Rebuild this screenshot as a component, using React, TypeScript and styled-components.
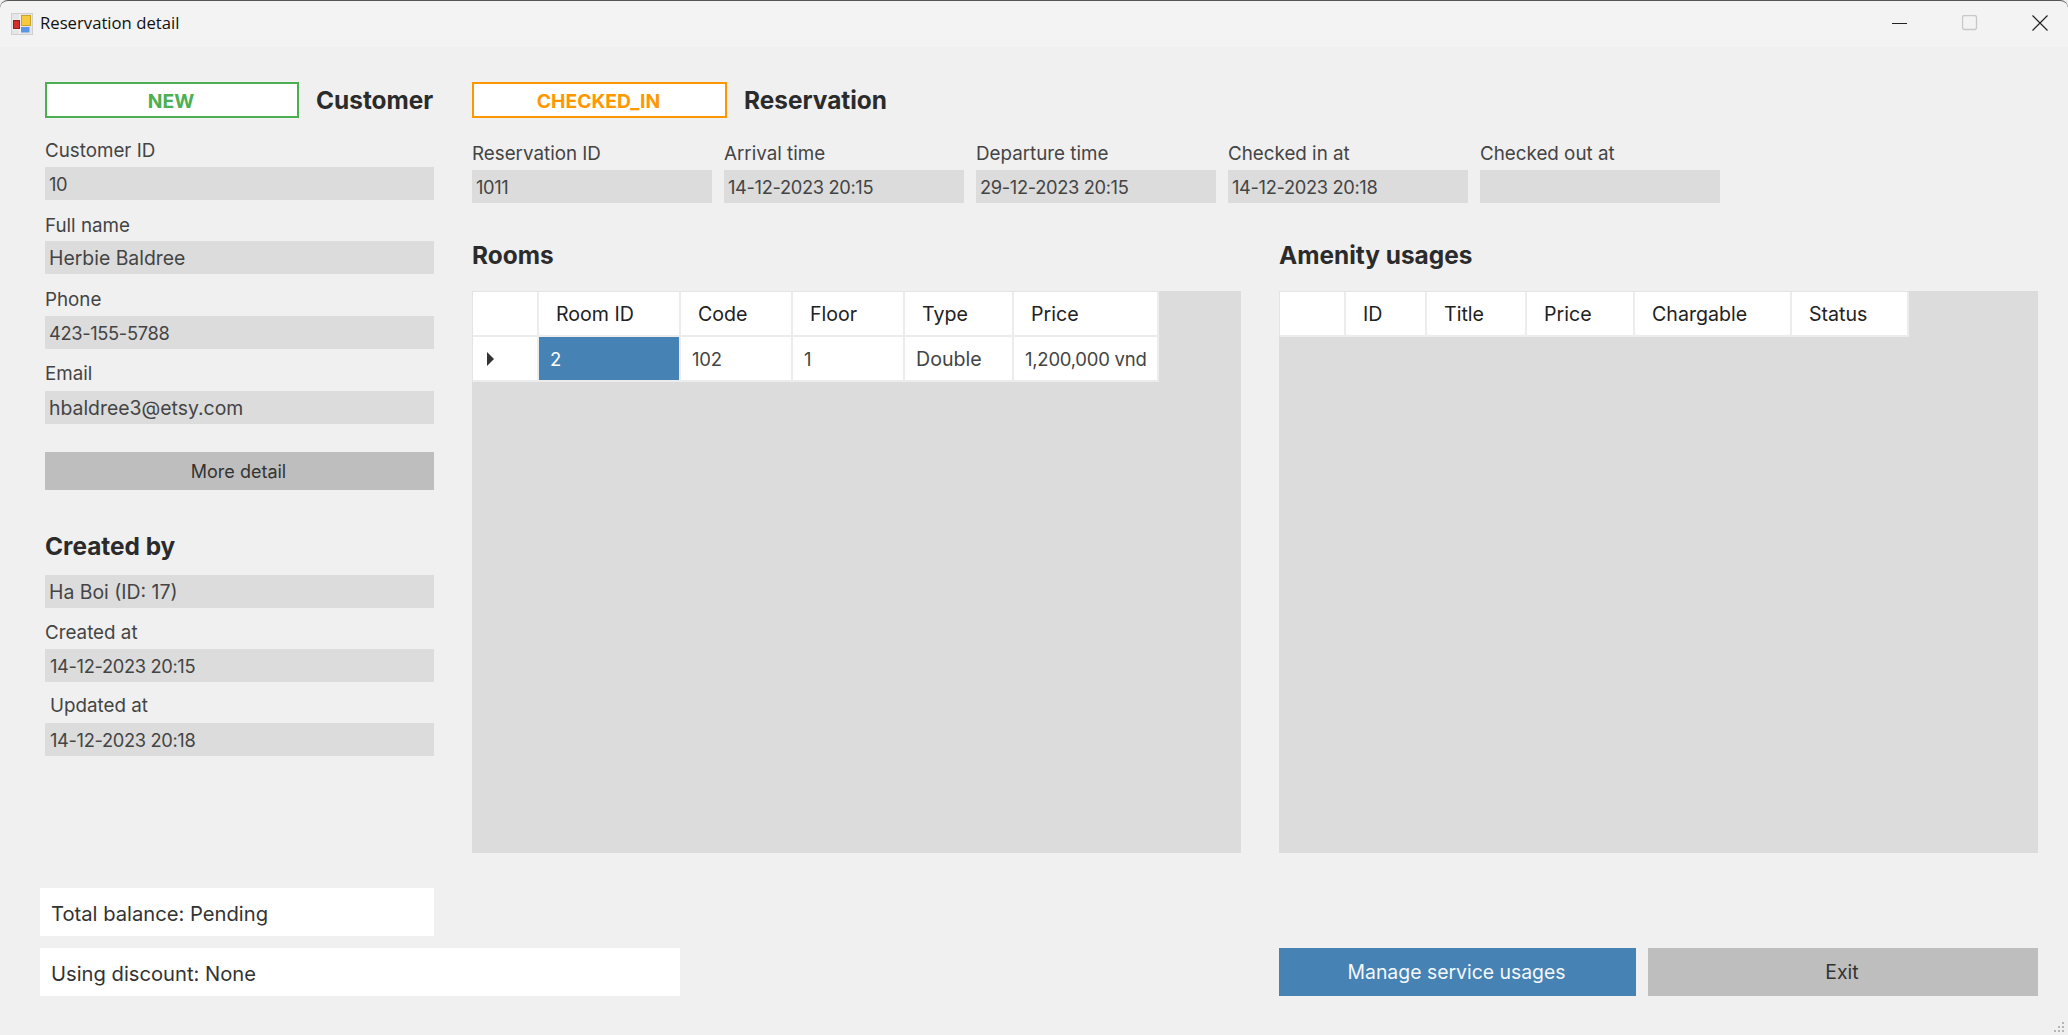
import React from "react";
import styled, { createGlobalStyle } from "styled-components";

const Global = createGlobalStyle`
  html, body { margin: 0; padding: 0; height: 100%; background: #f0f0f0; overflow: hidden; }
  #root { height: 100%; }
  * { box-sizing: border-box; }
`;

const Window = styled.div`
  position: relative; width: 2068px; height: 1035px; display: flex; flex-direction: column;
  background: #f0f0f0; font-family: Inter, "Liberation Sans", sans-serif; color: #333; overflow: hidden;
`;
const TitleBar = styled.header`
  height: 47px; flex: none; background: #f3f3f3; border-top: 1px solid #555; display: flex; align-items: center;
  padding-left: 11px; border-top-left-radius: 8px; border-top-right-radius: 8px;
`;
const TitleText = styled.span`
  margin-left: 7px; font: 400 16.7px "Open Sans", "Liberation Sans", sans-serif; color: #111; flex: 1; margin-top: -3px;
`;
const WinBtn = styled.button`
  width: 70px; height: 46px; border: 0; background: none; padding: 0; display: flex; align-items: center; justify-content: center;
  margin-top: -2px;
`;
const WinBtns = styled.div`display: flex; margin-right: -7px;`;
const Content = styled.main`
  flex: 1; padding: 35px 30px 0 45px; display: flex; flex-direction: column;
`;
const Main = styled.div`display: flex; gap: 38px; height: 806px;`;
const LeftCol = styled.section`width: 389px; flex: none; display: flex; flex-direction: column;`;
const RightCol = styled.section`flex: 1; display: flex; flex-direction: column; min-width: 0;`;
const HeadRow = styled.div`display: flex; align-items: center; gap: 17px; height: 36px;`;
const Badge = styled.div<{ $c: string; $w: number }>`
  width: ${p => p.$w}px; height: 36px; flex: none; background: #fff; border: 2px solid ${p => p.$c}; color: ${p => p.$c};
  font: 700 19.3px/34px Inter, sans-serif; text-align: center; padding-right: 2px;
`;
const Heading = styled.h2`margin: 0; font: 700 24.4px/28px Inter, sans-serif; color: #2b2b2b; white-space: nowrap;`;
const Label = styled.div<{ $t?: number; $i?: number }>`
  font: 400 18.8px/26px Inter, sans-serif; color: #444; height: 24px; white-space: nowrap;
  margin-top: ${p => p.$t ?? 0}px; margin-left: ${p => p.$i ?? 0}px;
`;
const Field = styled.div<{ $t?: number; $pad?: number; $num?: boolean }>`
  height: 33px; background: #dcdcdc; color: #444;
  font: 400 ${p => (p.$num ? "18.3px" : "19.4px")}/35px Inter, sans-serif;
  letter-spacing: ${p => (p.$num ? "-0.35px" : "0")};
  padding-left: ${p => p.$pad ?? 4}px; margin-top: ${p => p.$t ?? 0}px; white-space: nowrap; overflow: hidden;
`;
const MoreBtn = styled.button`
  height: 38px; margin-top: 28px; border: 0; background: #bebebe; color: #333; font: 400 18px Inter, sans-serif; padding: 0 2px 0 0;
`;
const SubHeading = styled(Heading)<{ $t: number; $b: number }>`
  margin-top: ${p => p.$t}px; margin-bottom: ${p => p.$b}px;
`;
const ResGrid = styled.div`display: grid; grid-template-columns: repeat(5, 240px); column-gap: 12px; margin-top: 23px;`;
const Grids = styled.div`display: grid; grid-template-columns: 769px 759px; column-gap: 38px; flex: 1; margin-top: 38px;`;
const Panel = styled.div`display: flex; flex-direction: column;`;
const GridArea = styled.div`height: 562px; margin-top: 22px; background: #dcdcdc;`;
const Table = styled.table`
  border-collapse: separate; border-spacing: 0; table-layout: fixed; background: #fff;
  font-family: Inter, sans-serif; font-size: 19.6px; color: #444;
  border-top: 1px solid #e4e4e4; border-left: 1px solid #e4e4e4;
`;
const Th = styled.th<{ $w: number }>`
  width: ${p => p.$w}px; height: 45px; font-weight: 400; text-align: left; padding-left: 17px; color: #222;
  border-right: 2px solid #ececec; border-bottom: 2px solid #ececec; background: #fff; white-space: nowrap;
`;
const Td = styled.td<{ $sel?: boolean; $num?: boolean }>`
  height: 45px; padding-left: 11px; white-space: nowrap; color: ${p => (p.$sel ? "#fff" : "#444")};
  font-size: ${p => (p.$num ? "18.5px" : "19.6px")};
  letter-spacing: ${p => (p.$num ? "-0.25px" : "0")};
  background: ${p => (p.$sel ? "#4682b4" : "#fff")};
  border-right: 2px solid #ececec; border-bottom: 2px solid #ececec;
`;
const Arrow = styled.div`
  width: 0; height: 0; margin-left: 3px; border-left: 7px solid #333; border-top: 7px solid transparent; border-bottom: 7px solid transparent;
`;
const Footer = styled.footer`
  display: flex; justify-content: space-between; align-items: flex-end; margin-left: -5px;
`;
const Stack = styled.div`display: flex; flex-direction: column; gap: 12px;`;
const Info = styled.div<{ $w: number }>`
  width: ${p => p.$w}px; height: 48px; background: #fff; padding: 2px 0 0 11px;
  font: 400 20.2px Inter, sans-serif; color: #333; display: flex; align-items: center;
`;
const Actions = styled.div`display: flex; gap: 12px;`;
const ActionBtn = styled.button<{ $blue?: boolean; $w: number }>`
  width: ${p => p.$w}px; height: 48px; border: 0; padding: 0 2px 0 0; font: 400 19.4px Inter, sans-serif;
  background: ${p => (p.$blue ? "#4682b4" : "#bebebe")}; color: ${p => (p.$blue ? "#f4f8fc" : "#333")};
`;
const Grip = styled.svg`position: absolute; right: 3px; bottom: 3px;`;

const AppIcon = () => (
  <svg width="22" height="22" viewBox="0 0 22 22">
    <rect x=".5" y=".5" width="21" height="21" fill="#e6e6e6" stroke="#cfcfcf" />
    <path d="M1 7h8M1 16h8M9 1v20" stroke="#fafafa" strokeWidth="1" />
    <rect x="10.5" y="2.5" width="9" height="10" fill="#f6c93f" stroke="#c9a227" />
    <rect x="2.5" y="7.5" width="6" height="8" fill="#d0312d" stroke="#8d1f1c" />
    <rect x="10" y="14" width="8.5" height="5.5" fill="#5b95e6" />
  </svg>
);

const rooms = [["Room ID", 142], ["Code", 112], ["Floor", 112], ["Type", 109], ["Price", 145]] as const;
const amen = [["ID", 81], ["Title", 100], ["Price", 108], ["Chargable", 157], ["Status", 117]] as const;

export default function App() {
  return (
    <Window>
      <Global />
      <TitleBar>
        <AppIcon />
        <TitleText>Reservation detail</TitleText>
        <WinBtns>
          <WinBtn aria-label="minimize"><svg width="16" height="16"><path d="M0 8.5h15" stroke="#222" /></svg></WinBtn>
          <WinBtn aria-label="maximize"><svg width="16" height="16"><rect x=".5" y=".5" width="14" height="14" rx="2" fill="none" stroke="#c8c8c8" strokeWidth="1.3" /></svg></WinBtn>
          <WinBtn aria-label="close"><svg width="16" height="16"><path d="M.5.5l15 15M15.5.5l-15 15" stroke="#222" strokeWidth="1.2" /></svg></WinBtn>
        </WinBtns>
      </TitleBar>
      <Content>
        <Main>
          <LeftCol>
            <HeadRow><Badge $c="#4caf50" $w={254}>NEW</Badge><Heading>Customer</Heading></HeadRow>
            <Label $t={20}>Customer ID</Label>
            <Field $t={5} $num>10</Field>
            <Label $t={13}>Full name</Label>
            <Field $t={4}>Herbie Baldree</Field>
            <Label $t={13}>Phone</Label>
            <Field $t={5} $num>423-155-5788</Field>
            <Label $t={12}>Email</Label>
            <Field $t={6}>hbaldree3@etsy.com</Field>
            <MoreBtn>More detail</MoreBtn>
            <SubHeading as="h3" $t={42} $b={15}>Created by</SubHeading>
            <Field>Ha Boi (ID: 17)</Field>
            <Label $t={12}>Created at</Label>
            <Field $t={5} $pad={5} $num>14-12-2023 20:15</Field>
            <Label $t={11} $i={5}>Updated at</Label>
            <Field $t={6} $pad={5} $num>14-12-2023 20:18</Field>
          </LeftCol>
          <RightCol>
            <HeadRow><Badge $c="#ff9800" $w={255}>CHECKED_IN</Badge><Heading>Reservation</Heading></HeadRow>
            <ResGrid>
              <div><Label>Reservation ID</Label><Field $t={5} $num>1011</Field></div>
              <div><Label>Arrival time</Label><Field $t={5} $num>14-12-2023 20:15</Field></div>
              <div><Label>Departure time</Label><Field $t={5} $num>29-12-2023 20:15</Field></div>
              <div><Label>Checked in at</Label><Field $t={5} $num>14-12-2023 20:18</Field></div>
              <div><Label>Checked out at</Label><Field $t={5}></Field></div>
            </ResGrid>
            <Grids>
              <Panel>
                <Heading>Rooms</Heading>
                <GridArea>
                  <Table>
                    <thead>
                      <tr>
                        <Th $w={66} />
                        {rooms.map(([t, w]) => <Th key={t} $w={w}>{t}</Th>)}
                      </tr>
                    </thead>
                    <tbody>
                      <tr>
                        <Td><Arrow /></Td>
                        <Td $sel $num>2</Td>
                        <Td $num>102</Td>
                        <Td $num>1</Td>
                        <Td>Double</Td>
                        <Td $num>1,200,000 vnd</Td>
                      </tr>
                    </tbody>
                  </Table>
                </GridArea>
              </Panel>
              <Panel>
                <Heading>Amenity usages</Heading>
                <GridArea>
                  <Table>
                    <thead>
                      <tr>
                        <Th $w={66} />
                        {amen.map(([t, w]) => <Th key={t} $w={w}>{t}</Th>)}
                      </tr>
                    </thead>
                  </Table>
                </GridArea>
              </Panel>
            </Grids>
          </RightCol>
        </Main>
        <Footer>
          <Stack>
            <Info $w={394}>Total balance: Pending</Info>
            <Info $w={640}>Using discount: None</Info>
          </Stack>
          <Actions>
            <ActionBtn $blue $w={357}>Manage service usages</ActionBtn>
            <ActionBtn $w={390}>Exit</ActionBtn>
          </Actions>
        </Footer>
      </Content>
      <Grip width="12" height="12" viewBox="0 0 12 12">
        <path d="M9 2h2v2H9zM5 6h2v2H5zM9 6h2v2H9zM1 10h2v2H1zM5 10h2v2H5zM9 10h2v2H9z" fill="#b5b5b5" />
      </Grip>
    </Window>
  );
}
